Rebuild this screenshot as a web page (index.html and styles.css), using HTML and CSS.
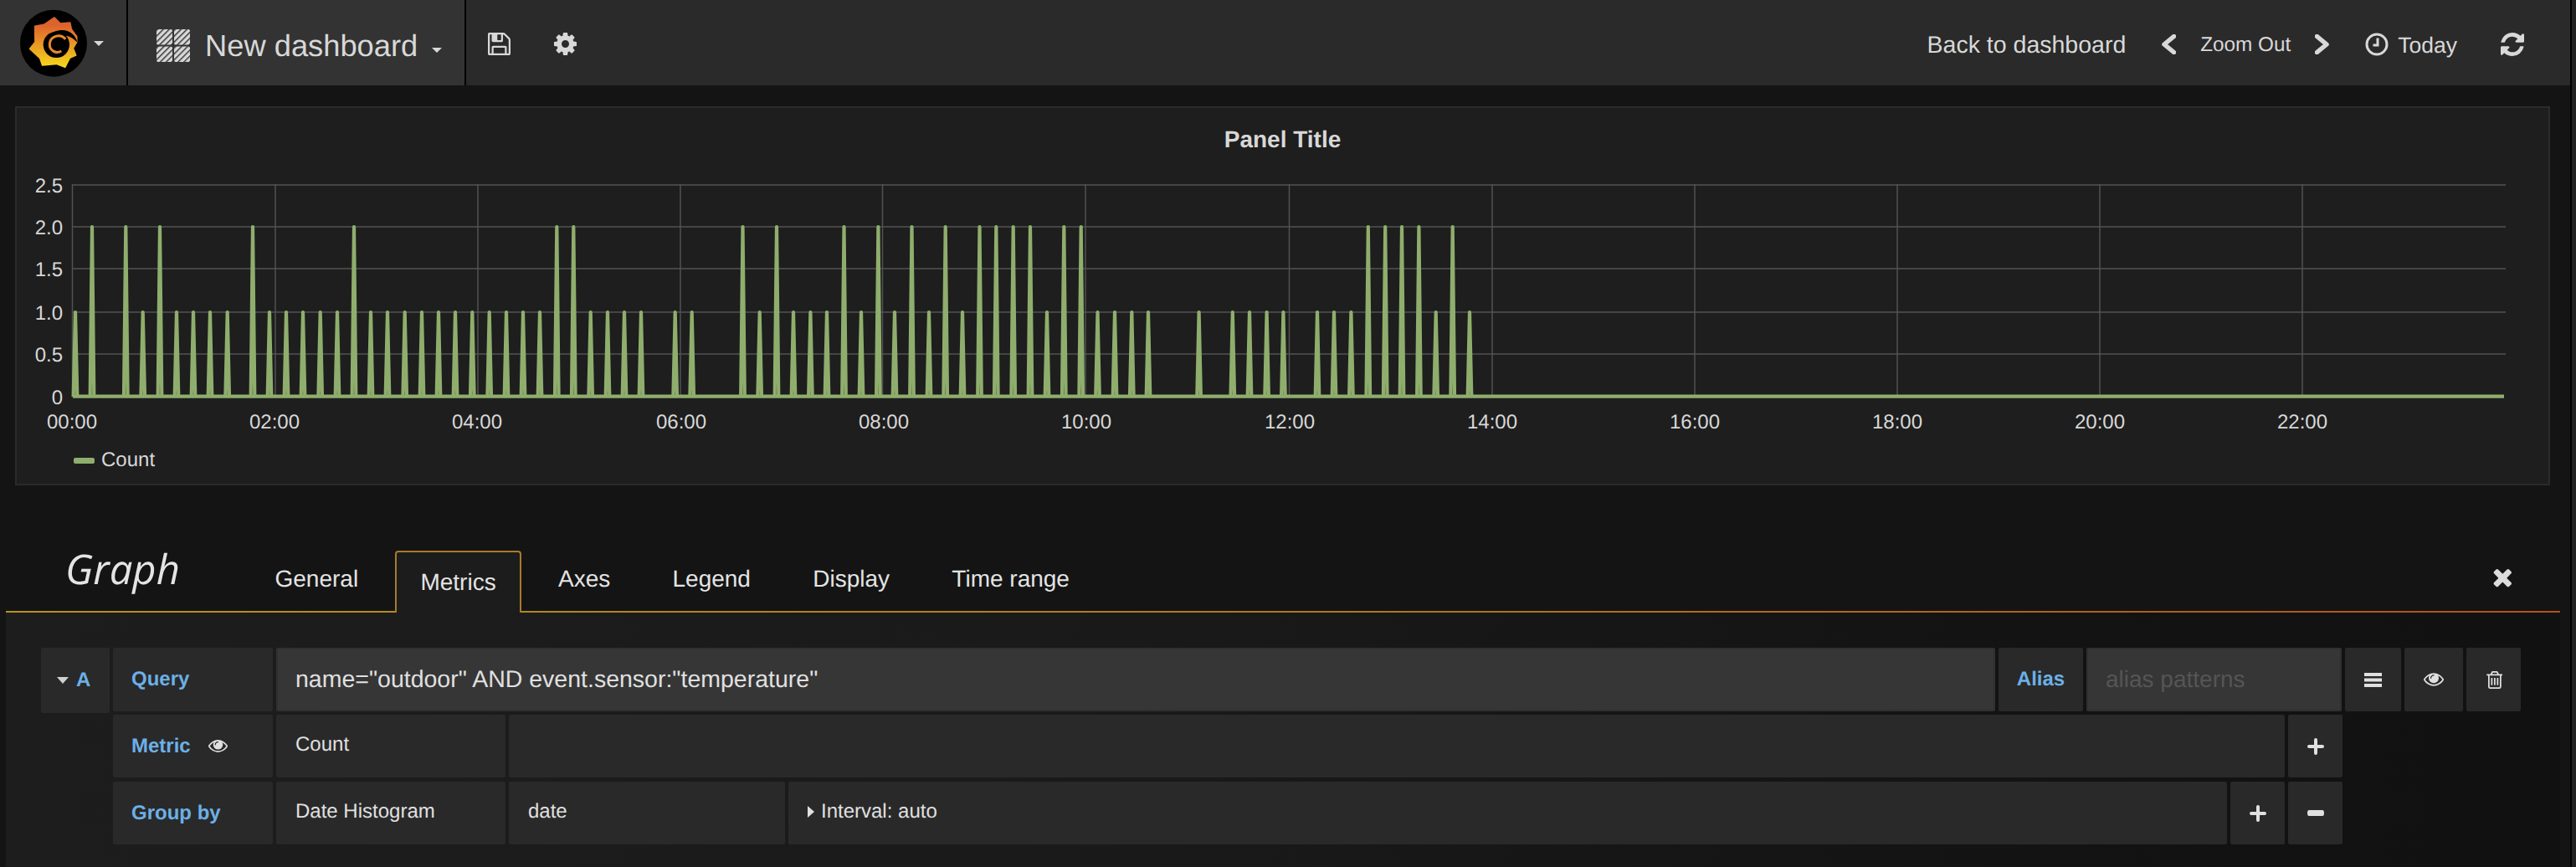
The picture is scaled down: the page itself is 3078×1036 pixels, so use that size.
FILE: index.html
```html
<!DOCTYPE html>
<html lang="en">
<head>
    <meta charset="UTF-8">
    <title>Grafana - New dashboard</title>
    <link rel="stylesheet" href="styles.css">
</head>
<body>
<div class="page">
    <nav class="topnav">
        <div class="nav-logo">
            <svg class="logo" viewBox="0 0 390 300">
                <defs>
                    <linearGradient id="sun" x1="0" y1="0" x2="0" y2="1">
                        <stop offset="0.15" stop-color="#dd632c"/>
                        <stop offset="1" stop-color="#f6d71d"/>
                    </linearGradient>
                </defs>
                <circle cx="162" cy="152" r="120" fill="#000"/>
                <path fill="url(#sun)" stroke="url(#sun)" stroke-width="5" stroke-linejoin="round" d="M165 60L186 81 221 78 226 102 245 128 245 148 232 170 242 195 220 205 203 238 172 226 122 231 113 205 77 172 96 148 95 91 128 85z"/>
                <circle cx="172" cy="157" r="47" fill="#000"/>
                <path fill="#000" d="M248 150C238 112 205 96 165 110L190 125C212 122 232 132 248 150z"/>
                <path fill="none" stroke="#e88a28" stroke-width="9" d="M205 137C185 116 150 126 148 155 147 178 170 191 190 180"/>
            </svg>
            <svg class="caret" viewBox="0 0 12 6"><path d="M0 0h12L6 6z"/></svg>
        </div>
        <div class="nav-title">
            <svg class="grid-icon" viewBox="0 0 40 39">
                <defs>
                    <pattern id="hatch" width="5" height="5" patternUnits="userSpaceOnUse" patternTransform="rotate(45)">
                        <rect width="5" height="5" fill="#d8d8d8"/>
                        <rect width="1.500" height="5" fill="#3a3a3a"/>
                    </pattern>
                </defs>
                <rect width="19" height="18.500" rx="2" fill="url(#hatch)"/>
                <rect x="21" width="19" height="18.500" rx="2" fill="url(#hatch)"/>
                <rect y="20.500" width="19" height="18.500" rx="2" fill="url(#hatch)"/>
                <rect x="21" y="20.500" width="19" height="18.500" rx="2" fill="url(#hatch)"/>
            </svg>
            <span class="dash-name">New dashboard</span>
            <svg class="caret" viewBox="0 0 12 6"><path d="M0 0h12L6 6z"/></svg>
        </div>
        <div class="nav-icons">
            <svg class="save-icon" viewBox="128 128 1536 1536"><path d="M512 1536h768v-384h-768v384zm896 0h128v-896q0-14-10-38.5t-20-34.500l-281-281q-10-10-34-20t-39-10v416q0 40-28 68t-68 28h-576q-40 0-68-28t-28-68v-416h-128v1280h128v-416q0-40 28-68t68-28h832q40 0 68 28t28 68v416zm-384-928v-320q0-13-9.500-22.500t-22.500-9.500h-192q-13 0-22.500 9.500t-9.500 22.500v320q0 13 9.500 22.500t22.500 9.500h192q13 0 22.500-9.500t9.500-22.500zm640 32v928q0 40-28 68t-68 28h-1344q-40 0-68-28t-28-68v-1344q0-40 28-68t68-28h928q40 0 88 20t76 48l280 280q28 28 48 76t20 88z"/></svg>
            <svg class="gear-icon" viewBox="128 128 1536 1536"><path d="M1152 896q0-106-75-181t-181-75-181 75-75 181 75 181 181 75 181-75 75-181zm512-109v222q0 12-8 23t-20 13l-185 28q-19 54-39 91 35 50 107 138 10 12 10 25t-9 23q-27 37-99 108t-94 71q-12 0-26-9l-138-108q-44 23-91 38-16 136-29 186-7 28-36 28h-222q-14 0-24.500-8.500t-11.500-21.500l-28-184q-49-16-90-37l-141 107q-10 9-25 9-14 0-25-11-126-114-165-168-7-10-7-23 0-12 8-23 15-21 51-66.500t54-70.500q-27-50-41-99l-183-27q-13-2-21-12.500t-8-23.500v-222q0-12 8-23t19-13l186-28q14-46 39-92-40-57-107-138-10-12-10-24 0-10 9-23 26-36 98.500-107.500t94.500-71.500q13 0 26 10l138 107q44-23 91-38 16-136 29-186 7-28 36-28h222q14 0 24.500 8.500t11.500 21.500l28 184q49 16 90 37l142-107q9-9 24-9 13 0 25 10 129 119 165 170 7 8 7 22 0 12-8 23-15 21-51 66.500t-54 70.500q26 50 41 98l183 28q13 2 21 12.500t8 23.500z"/></svg>
        </div>
        <div class="nav-right">
            <span class="back-link">Back to dashboard</span>
            <svg class="chevron" viewBox="0 0 17 24"><path d="M14.500 2.500L3 12l11.500 9.500"/></svg>
            <span class="zoom-out">Zoom Out</span>
            <svg class="chevron" viewBox="0 0 17 24"><path d="M2.500 2.500L14 12 2.500 21.500"/></svg>
            <svg class="clock-icon" viewBox="0 0 28 28"><circle cx="14" cy="14" r="12"/><path d="M15 6.500v8.500H9.500"/></svg>
            <span class="today">Today</span>
            <svg class="refresh-icon" viewBox="128 128 1536 1536"><path d="M1639 1056q0 5-1 7-64 268-268 434.500t-478 166.500q-146 0-282.500-55t-243.500-157l-129 129q-19 19-45 19t-45-19-19-45v-448q0-26 19-45t45-19h448q26 0 45 19t19 45-19 45l-137 137q71 66 161 102t187 36q134 0 250-65t186-179q11-17 53-117 8-23 30-23h192q13 0 22.500 9.500t9.500 22.500zm25-800v448q0 26-19 45t-45 19h-448q-26 0-45-19t-19-45 19-45l138-138q-148-137-349-137-134 0-250 65t-186 179q-11 17-53 117-8 23-30 23h-199q-13 0-22.500-9.500t-9.500-22.500v-7q65-268 270-434.500t480-166.500q146 0 284 55.500t245 156.500l130-129q19-19 45-19t45 19 19 45z"/></svg>
        </div>
    </nav>

    <section class="panel">
        <div class="panel-title">Panel Title</div>
        <svg class="chart" viewBox="20 200 3025 325">
            <!-- grid -->
            <path class="grid-h" d="M86 221H2994M86 271H2994M86 321H2994M86 373H2994M86 423H2994"/>
            <path class="grid-v" d="M86.500 220V474M329 220V474M571 220V474M813 220V474M1054.500 220V474M1297 220V474M1540.500 220V474M1783 220V474M2025 220V474M2267 220V474M2509 220V474M2751 220V474"/>
            <!-- series: spikes of value 1, spikes of value 2, zero line -->
            <path class="series" d="M87.700 474l2.300-101 2.300 101M168.400 474l2.300-101 2.300 101M208.700 474l2.300-101 2.300 101M228.700 474l2.300-101 2.300 101M248.700 474l2.300-101 2.300 101M269.400 474l2.300-101 2.300 101M319.700 474l2.300-101 2.300 101M339.700 474l2.300-101 2.300 101M359.700 474l2.300-101 2.300 101M380.400 474l2.300-101 2.300 101M400.700 474l2.300-101 2.300 101M440.700 474l2.300-101 2.300 101M460.700 474l2.300-101 2.300 101M481.400 474l2.300-101 2.300 101M501.700 474l2.300-101 2.300 101M521.700 474l2.300-101 2.300 101M541.700 474l2.300-101 2.300 101M562 474l2.300-101 2.300 101M582.400 474l2.300-101 2.300 101M602.700 474l2.300-101 2.300 101M622.700 474l2.300-101 2.300 101M642.700 474l2.300-101 2.300 101M703.400 474l2.300-101 2.300 101M723.700 474l2.300-101 2.300 101M743.700 474l2.300-101 2.300 101M763.700 474l2.300-101 2.300 101M804.400 474l2.300-101 2.300 101M824.400 474l2.300-101 2.300 101M905.400 474l2.300-101 2.300 101M945.700 474l2.300-101 2.300 101M966.100 474l2.300-101 2.300 101M985.700 474l2.300-101 2.300 101M1026.700 474l2.300-101 2.300 101M1066.700 474l2.300-101 2.300 101M1107.700 474l2.300-101 2.300 101M1147.700 474l2.300-101 2.300 101M1248.700 474l2.300-101 2.300 101M1309.200 474l2.300-101 2.300 101M1329.700 474l2.300-101 2.300 101M1350 474l2.300-101 2.300 101M1369.700 474l2.300-101 2.300 101M1430.300 474l2.300-101 2.300 101M1470.500 474l2.300-101 2.300 101M1490.700 474l2.300-101 2.300 101M1511.300 474l2.300-101 2.300 101M1531.100 474l2.300-101 2.300 101M1571.700 474l2.300-101 2.300 101M1591.700 474l2.300-101 2.300 101M1612.100 474l2.300-101 2.300 101M1713.400 474l2.300-101 2.300 101M1753.700 474l2.300-101 2.300 101"/>
            <path class="series" d="M107.700 474l2.300-203 2.300 203M148 474l2.300-203 2.300 203M188.700 474l2.300-203 2.300 203M299.700 474l2.300-203 2.300 203M420.700 474l2.300-203 2.300 203M663 474l2.300-203 2.300 203M683 474l2.300-203 2.300 203M885.200 474l2.300-203 2.300 203M925.700 474l2.300-203 2.300 203M1006.200 474l2.300-203 2.300 203M1047.100 474l2.300-203 2.300 203M1087.200 474l2.300-203 2.300 203M1127.400 474l2.300-203 2.300 203M1168.200 474l2.300-203 2.300 203M1188 474l2.300-203 2.300 203M1208.400 474l2.300-203 2.300 203M1228.700 474l2.300-203 2.300 203M1269 474l2.300-203 2.300 203M1289.400 474l2.300-203 2.300 203M1632.500 474l2.300-203 2.300 203M1652.900 474l2.300-203 2.300 203M1672.700 474l2.300-203 2.300 203M1693.100 474l2.300-203 2.300 203M1733.400 474l2.300-203 2.300 203"/>
            <path class="series" d="M87 473.700H2992"/>
            <!-- y axis -->
            <g class="axis-y">
                <text x="75" y="230">2.5</text>
                <text x="75" y="280">2.0</text>
                <text x="75" y="330">1.5</text>
                <text x="75" y="382">1.0</text>
                <text x="75" y="432">0.5</text>
                <text x="75" y="483">0</text>
            </g>
            <!-- x axis -->
            <g class="axis-x">
                <text x="86" y="512">00:00</text>
                <text x="328" y="512">02:00</text>
                <text x="570" y="512">04:00</text>
                <text x="814" y="512">06:00</text>
                <text x="1056" y="512">08:00</text>
                <text x="1298" y="512">10:00</text>
                <text x="1541" y="512">12:00</text>
                <text x="1783" y="512">14:00</text>
                <text x="2025" y="512">16:00</text>
                <text x="2267" y="512">18:00</text>
                <text x="2509" y="512">20:00</text>
                <text x="2751" y="512">22:00</text>
            </g>
        </svg>
        <div class="legend">
            <span class="legend-swatch"></span>
            <span class="legend-label">Count</span>
        </div>
    </section>

    <section class="editor">
        <div class="editor-tabs">
            <div class="editor-title">Graph</div>
            <div class="tab">General</div>
            <div class="tab active">Metrics</div>
            <div class="tab">Axes</div>
            <div class="tab">Legend</div>
            <div class="tab">Display</div>
            <div class="tab">Time range</div>
            <svg class="close-icon" viewBox="214 352 1276 1202"><path d="M1490 1322q0 40-28 68l-136 136q-28 28-68 28t-68-28l-294-294-294 294q-28 28-68 28t-68-28l-136-136q-28-28-28-68t28-68l294-294-294-294q-28-28-28-68t28-68l136-136q28-28 68-28t68 28l294 294 294-294q28-28 68-28t68 28l136 136q28 28 28 68t-28 68l-294 294 294 294q28 28 28 68z"/></svg>
        </div>
        <div class="editor-body">
            <div class="query-row">
                <div class="cell ref-cell">
                    <svg class="ref-caret" viewBox="0 0 14 8"><path d="M0 0h14L7 8z"/></svg>
                    <span class="label-text">A</span>
                </div>
                <div class="cell label-cell label-text">Query</div>
                <div class="cell input-cell query-input">name="outdoor" AND event.sensor:"temperature"</div>
                <div class="cell alias-cell label-text">Alias</div>
                <div class="cell input-cell alias-input">alias patterns</div>
                <div class="cell icon-cell menu-cell">
                    <svg class="menu-icon" viewBox="0 0 21 17"><path d="M0 0h21v4H0zM0 6.500h21v4H0zM0 13h21v4H0z"/></svg>
                </div>
                <div class="cell icon-cell eye-cell">
                    <svg class="eye-icon" viewBox="0 384 1792 1152"><path d="M1664 960q-152-236-381-353 61 104 61 225 0 185-131.500 316.500t-316.500 131.500-316.500-131.500-131.500-316.500q0-121 61-225-229 117-381 353 133 205 333.500 326.500t434.500 121.500 434.500-121.500 333.500-326.500zm-720-384q0-20-14-34t-34-14q-125 0-214.500 89.500t-89.500 214.500q0 20 14 34t34 14 34-14 14-34q0-86 61-147t147-61q20 0 34-14t14-34zm848 384q0 34-20 69-140 230-376.500 368.500t-499.500 138.500-499.500-139-376.500-368q-20-35-20-69t20-69q140-229 376.500-368t499.500-139 499.500 139 376.500 368q20 35 20 69z"/></svg>
                </div>
                <div class="cell icon-cell trash-cell">
                    <svg class="trash-icon" viewBox="128 128 1408 1536"><path d="M704 736v576q0 14-9 23t-23 9h-64q-14 0-23-9t-9-23v-576q0-14 9-23t23-9h64q14 0 23 9t9 23zm256 0v576q0 14-9 23t-23 9h-64q-14 0-23-9t-9-23v-576q0-14 9-23t23-9h64q14 0 23 9t9 23zm256 0v576q0 14-9 23t-23 9h-64q-14 0-23-9t-9-23v-576q0-14 9-23t23-9h64q14 0 23 9t9 23zm128 724v-948h-896v948q0 22 7 40.500t14.500 27 10.500 8.500h832q3 0 10.500-8.500t14.500-27 7-40.500zm-672-1076h448l-48-117q-7-9-17-11h-317q-10 2-17 11zm928 32v64q0 14-9 23t-23 9h-96v948q0 83-47 143.500t-113 60.500h-832q-66 0-113-58.500t-47-141.500v-952h-96q-14 0-23-9t-9-23v-64q0-14 9-23t23-9h309l70-167q15-37 54-63t79-26h320q40 0 79 26t54 63l70 167h309q14 0 23 9t9 23z"/></svg>
                </div>
            </div>
            <div class="query-row sub-row">
                <div class="cell label-cell label-text">Metric
                    <svg class="metric-eye" viewBox="0 384 1792 1152"><path d="M1664 960q-152-236-381-353 61 104 61 225 0 185-131.500 316.500t-316.500 131.500-316.500-131.500-131.500-316.500q0-121 61-225-229 117-381 353 133 205 333.500 326.500t434.500 121.500 434.500-121.500 333.500-326.500zm-720-384q0-20-14-34t-34-14q-125 0-214.500 89.500t-89.500 214.500q0 20 14 34t34 14 34-14 14-34q0-86 61-147t147-61q20 0 34-14t14-34zm848 384q0 34-20 69-140 230-376.500 368.500t-499.500 138.500-499.500-139-376.500-368q-20-35-20-69t20-69q140-229 376.500-368t499.500-139 499.500 139 376.500 368q20 35 20 69z"/></svg>
                </div>
                <div class="cell type-cell">Count</div>
                <div class="cell fill-cell"></div>
                <div class="cell btn-cell">
                    <svg class="plus-icon" viewBox="0 0 20 20"><path d="M8 2q0-2 2-2t2 2v6h6q2 0 2 2t-2 2h-6v6q0 2-2 2t-2-2v-6H2q-2 0-2-2t2-2h6z"/></svg>
                </div>
            </div>
            <div class="query-row sub-row group-row">
                <div class="cell label-cell label-text">Group by</div>
                <div class="cell type-cell">Date Histogram</div>
                <div class="cell field-cell">date</div>
                <div class="cell fill-cell">
                    <svg class="interval-caret" viewBox="0 0 8 14"><path d="M0 0l8 7-8 7z"/></svg>
                    <span>Interval: auto</span>
                </div>
                <div class="cell btn-cell">
                    <svg class="plus-icon" viewBox="0 0 20 20"><path d="M8 2q0-2 2-2t2 2v6h6q2 0 2 2t-2 2h-6v6q0 2-2 2t-2-2v-6H2q-2 0-2-2t2-2h6z"/></svg>
                </div>
                <div class="cell btn-cell">
                    <svg class="minus-icon" viewBox="0 0 20 7"><path d="M2 0h16q2 0 2 3.500T18 7H2Q0 7 0 3.500T2 0z"/></svg>
                </div>
            </div>
        </div>
    </section>
</div>
<div class="scroll-strip"></div>
</body>
</html>
```

FILE: styles.css
```css
html, body {
    margin: 0;
    padding: 0;
    height: 1036px;
    overflow: hidden;
}

body {
    display: flex;
    background: #141414;
    color: #d8d8d8;
    font-family: "Liberation Sans", Arial, sans-serif;
    text-rendering: geometricPrecision;
}

.page {
    width: 3071px;
    flex: none;
}

.scroll-strip {
    flex: 1;
    background: #222;
    border-left: 2px solid #000;
}

/* top bar */

.topnav {
    display: flex;
    align-items: stretch;
    height: 102px;
    background: #2a2a2a;
}

.caret {
    width: 12px;
    height: 6px;
    fill: #d8d8d8;
}

.nav-logo {
    display: flex;
    align-items: center;
    box-sizing: border-box;
    width: 153px;
    background: #333;
    border-right: 2px solid #000;
}

.logo {
    width: 130px;
    height: 100px;
    margin-left: 10px;
    margin-right: -28px;
}

.nav-logo .caret {
    margin-top: 2px;
}

.nav-title {
    display: flex;
    align-items: center;
    box-sizing: border-box;
    width: 404px;
    padding-left: 34px;
    background: #333;
    border-right: 2px solid #000;
}

.grid-icon {
    width: 40px;
    height: 39px;
    margin-top: 7px;
    margin-right: 18px;
}

.dash-name {
    padding-top: 8px;
    font-size: 36.300px;
    color: #d8d8d8;
}

.nav-title .caret {
    margin-left: 17px;
    margin-top: 18px;
}

.nav-icons {
    display: flex;
    align-items: center;
    gap: 52px;
    padding-left: 26px;
    padding-top: 3px;
}

.save-icon, .gear-icon {
    width: 27px;
    height: 27px;
    fill: #d8d8d8;
}

.nav-right {
    display: flex;
    align-items: center;
    margin-left: auto;
    padding-top: 3px;
    padding-right: 55px;
    font-size: 28px;
}

.chevron {
    width: 17px;
    height: 24px;
    fill: none;
    stroke: #d8d8d8;
    stroke-width: 5.500;
    stroke-linejoin: round;
    stroke-linecap: round;
}

.back-link {
    padding-top: 4px;
    margin-right: 43px;
    font-size: 28.500px;
}

.zoom-out {
    padding-top: 2px;
    font-size: 24.300px;
    margin: 0 29px;
}

.clock-icon {
    width: 28px;
    height: 28px;
    margin-left: 43px;
    fill: none;
    stroke: #d8d8d8;
    stroke-width: 3;
}

.today {
    padding-top: 4px;
    font-size: 26.500px;
    margin-left: 11px;
    margin-right: 52px;
}

.refresh-icon {
    width: 28px;
    height: 28px;
    fill: #d8d8d8;
}

/* graph panel */

.panel {
    box-sizing: border-box;
    height: 453px;
    margin: 25px 24px 0 18px;
    background: #1e1e1e;
    border: 2px solid #2b2b2b;
}

.panel-title {
    height: 36px;
    margin: 20px 0 15px;
    font-size: 28px;
    font-weight: bold;
    line-height: 36px;
    text-align: center;
}

.chart {
    display: block;
    width: 3025px;
    height: 325px;
}

.grid-h {
    fill: none;
    stroke: #454545;
    stroke-width: 2;
}

.grid-v {
    fill: none;
    stroke: #525252;
    stroke-width: 1.500;
}

.series {
    fill: none;
    stroke: #8fae6d;
    stroke-width: 4.200;
    stroke-linejoin: round;
}

.axis-y text, .axis-x text {
    fill: #d8d8d8;
    font-size: 24px;
}

.axis-y text {
    text-anchor: end;
}

.axis-x text {
    text-anchor: middle;
}

.legend {
    display: flex;
    align-items: center;
    height: 50px;
    padding-left: 68px;
    font-size: 24px;
}

.legend-swatch {
    width: 25px;
    height: 7px;
    margin-right: 8px;
    background: #8fae6d;
    border-radius: 2px;
}

/* editor */

.editor {
    margin: 0 12px 0 7px;
}

.editor-tabs {
    display: flex;
    align-items: stretch;
    box-sizing: border-box;
    height: 152px;
    padding-top: 78px;
    padding-left: 71px;
    border-bottom: 2px solid;
    border-image: linear-gradient(90deg, #b8921f, #ae7a1e 50%, #b0521c) 1;
}

.editor-title {
    width: 220.500px;
    margin-top: -8px;
    font-family: "Open Sans", sans-serif;
    font-size: 49px;
    font-style: italic;
    line-height: 60px;
    color: #e4e4e4;
}

.tab {
    box-sizing: border-box;
    height: 72px;
    margin-right: 14.300px;
    padding: 14px 30px 0;
    font-size: 28px;
    line-height: 40px;
    color: #e4e4e4;
}

.tab.active {
    height: 74px;
    padding: 16px 28px 0;
    background: #1c1c1c;
    border: 2px solid #a87a2a;
    border-bottom: none;
    border-radius: 4px 4px 0 0;
}

.close-icon {
    width: 23px;
    height: 23px;
    margin-left: auto;
    margin-right: 58px;
    margin-top: 21px;
    fill: #dcdcdc;
}

.editor-body {
    height: 304px;
    box-sizing: border-box;
    padding: 42px 0 0 42px;
    background: linear-gradient(90deg, #1d1d1d, #1a1a1a 40%, #121212 85%, #111);
}

.query-row {
    display: flex;
    gap: 4px;
    height: 76px;
    margin-bottom: 4px;
}

.sub-row {
    width: 2664px;
    height: 75px;
    margin-left: 86px;
}

.group-row {
    margin-top: 5px;
}

.cell {
    display: flex;
    align-items: center;
    flex: none;
    box-sizing: border-box;
    background: #292929;
    border-radius: 2px;
    font-size: 24px;
    color: #e0e0e0;
}

.label-text {
    font-weight: bold;
    color: #6cb0e6;
}

.ref-cell {
    width: 82px;
    height: 78px;
    padding-left: 19px;
}

.ref-caret {
    width: 14px;
    height: 8px;
    margin-right: 9px;
    fill: #d0d0d0;
}

.label-cell {
    width: 191px;
    padding-left: 22px;
}

.input-cell {
    background: #363636;
    border: 2px solid #303030;
    font-size: 28px;
}

.query-input {
    width: 2054px;
    padding-left: 21px;
    font-size: 28.500px;
}

.alias-cell {
    width: 101px;
    justify-content: center;
}

.alias-input {
    width: 305px;
    padding-left: 21px;
    color: #555;
}

.icon-cell {
    justify-content: center;
}

.menu-cell {
    width: 67px;
}

.eye-cell {
    width: 70px;
}

.trash-cell {
    width: 65px;
}

.menu-icon {
    width: 21px;
    height: 17px;
    fill: #e0e0e0;
}

.eye-icon {
    width: 24px;
    height: 16px;
    fill: #e0e0e0;
}

.trash-icon {
    width: 20px;
    height: 21px;
    fill: #e0e0e0;
}

.metric-eye {
    width: 23px;
    height: 15px;
    margin-left: 21px;
    fill: #e0e0e0;
}

.type-cell {
    width: 274px;
    padding-left: 23px;
    padding-bottom: 3px;
}

.field-cell {
    width: 330px;
    padding-left: 23px;
    padding-bottom: 3px;
}

.fill-cell {
    flex: 1;
    padding-left: 23px;
    padding-bottom: 3px;
}

.btn-cell {
    justify-content: center;
    width: 65px;
}

.interval-caret {
    width: 8px;
    height: 14px;
    margin-right: 8px;
    fill: #e0e0e0;
}

.plus-icon {
    width: 20px;
    height: 20px;
    fill: #e0e0e0;
}

.minus-icon {
    width: 20px;
    height: 7px;
    fill: #e0e0e0;
}
```
